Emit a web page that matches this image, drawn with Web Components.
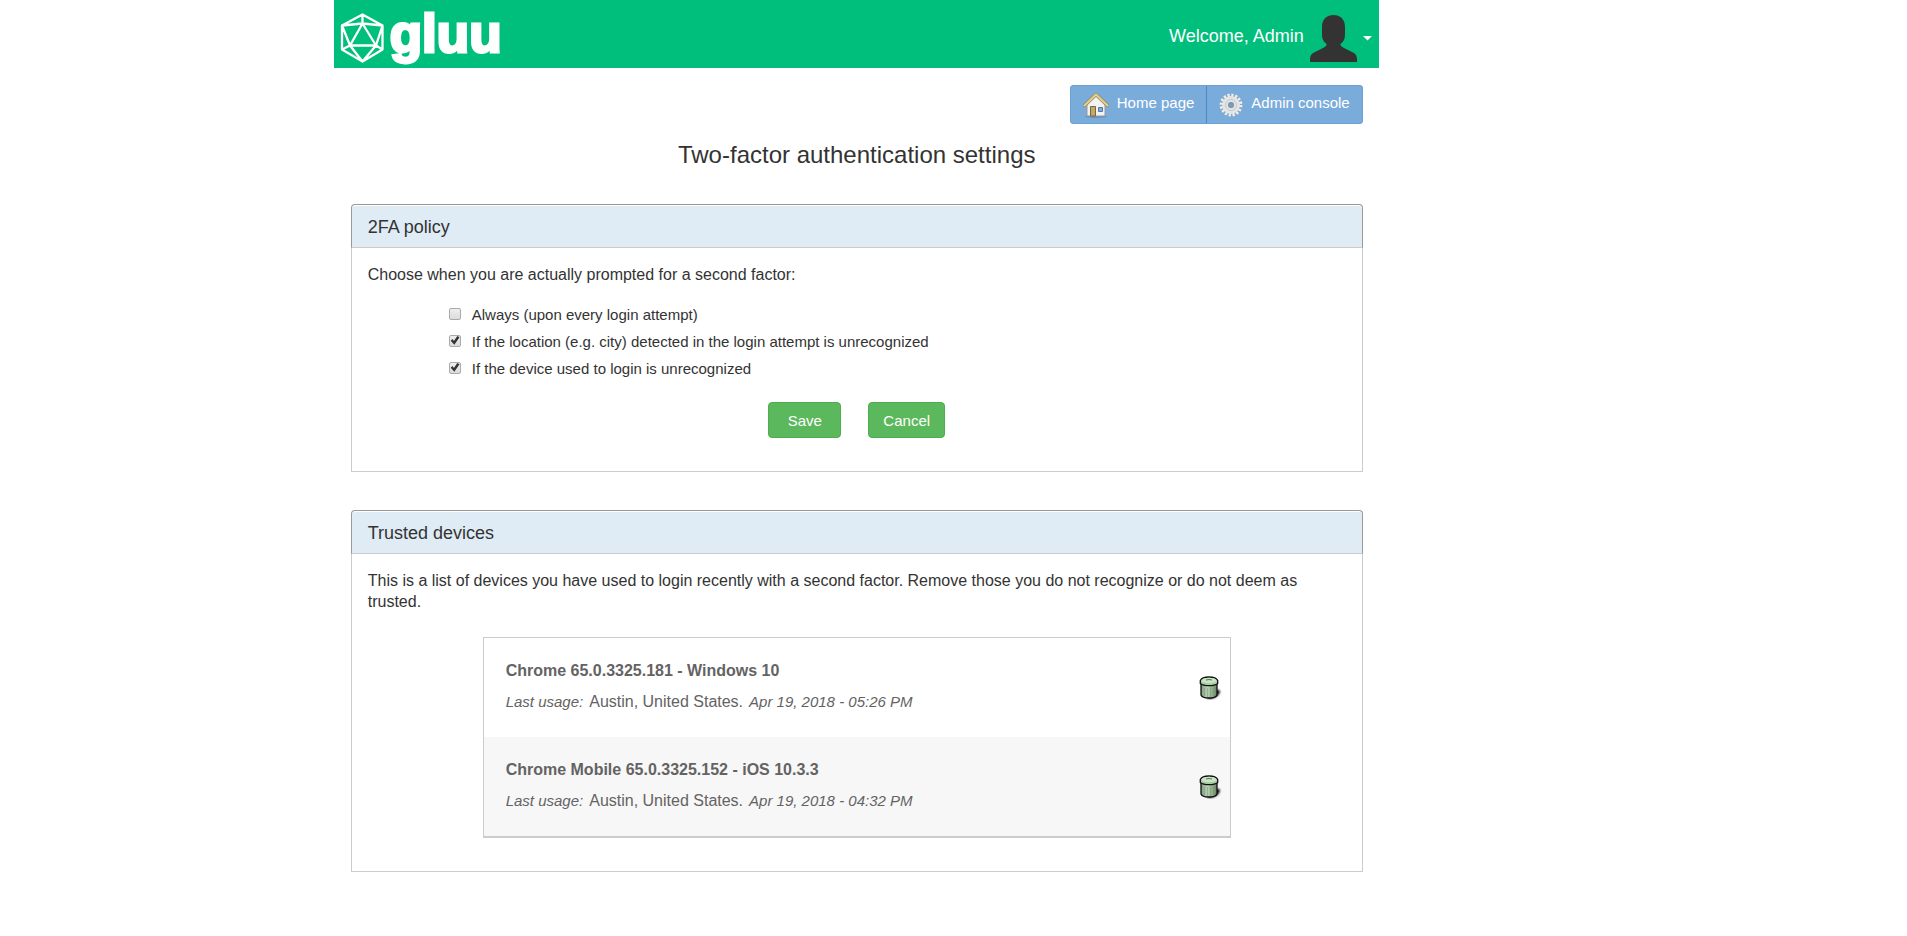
<!DOCTYPE html>
<html lang="en">
<head>
<meta charset="utf-8">
<meta name="viewport" content="width=device-width, initial-scale=1">
<title>Two-factor authentication settings</title>
<style>
  body { margin: 0; background: #fff; color: #333; font: 16px/21px "Liberation Sans", Arial, sans-serif; }
</style>
</head>
<body>
<gluu-page>
  <gluu-header slot="header">Welcome, Admin</gluu-header>
  <gluu-nav slot="nav"></gluu-nav>
  <span slot="title">Two-factor authentication settings</span>
  <gluu-panel>
    <span slot="heading">2FA policy</span>
    <gluu-policy>
      <span slot="intro">Choose when you are actually prompted for a second factor:</span>
      <gluu-option>Always (upon every login attempt)</gluu-option>
      <gluu-option checked>If the location (e.g. city) detected in the login attempt is unrecognized</gluu-option>
      <gluu-option checked>If the device used to login is unrecognized</gluu-option>
      <gluu-button slot="actions">Save</gluu-button>
      <gluu-button slot="actions">Cancel</gluu-button>
    </gluu-policy>
  </gluu-panel>
  <gluu-panel>
    <span slot="heading">Trusted devices</span>
    <gluu-devices>
      <span slot="intro">This is a list of devices you have used to login recently with a second factor. Remove those you do not recognize or do not deem as trusted.</span>
      <gluu-device>
        <span slot="name">Chrome 65.0.3325.181 - Windows 10</span>
        <span slot="place">Austin, United States.</span>
        <span slot="time">Apr 19, 2018 - 05:26 PM</span>
      </gluu-device>
      <gluu-device>
        <span slot="name">Chrome Mobile 65.0.3325.152 - iOS 10.3.3</span>
        <span slot="place">Austin, United States.</span>
        <span slot="time">Apr 19, 2018 - 04:32 PM</span>
      </gluu-device>
    </gluu-devices>
  </gluu-panel>
</gluu-page>

<script>
const define = (name, html) => {
  const template = document.createElement('template');
  template.innerHTML = html;
  customElements.define(name, class extends HTMLElement {
    constructor() {
      super();
      this.attachShadow({ mode: 'open' }).append(template.content.cloneNode(true));
    }
    connectedCallback() {
      const box = this.shadowRoot.querySelector('input');
      if (box) box.checked = this.hasAttribute('checked');
    }
  });
};

define('gluu-page', `
  <style>
    :host { display: block; max-width: 1045px; margin-left: 17.5%; }
    main { padding: 17px 16px 40px 17px; }
    .nav { display: flex; justify-content: flex-end; }
    h1 { margin: 16px 0 34px; font-size: 24px; line-height: 30px; font-weight: 400; text-align: center; }
    .panels { display: flex; flex-direction: column; gap: 38px; }
  </style>
  <slot name="header"></slot>
  <main>
    <div class="nav"><slot name="nav"></slot></div>
    <h1><slot name="title"></slot></h1>
    <div class="panels"><slot></slot></div>
  </main>`);

define('gluu-header', `
  <style>
    :host { display: block; }
    header { display: flex; justify-content: space-between; height: 68px; background: #00be7b; color: #fff; }
    .logo { display: flex; align-items: center; gap: 5px; padding-left: 6px; color: #fff; text-decoration: none; }
    .logo svg { margin-top: 8px; }
    .word { font-weight: 700; font-size: 53px; line-height: 66px; -webkit-text-stroke: 3px #fff; stroke-linejoin: round; }
    button { display: flex; align-items: center; gap: 6px; border: 0; padding: 8px 7px 0 0; background: none; color: inherit; font: inherit; font-size: 18px; cursor: pointer; }
    .label { padding-bottom: 4px; }
  </style>
  <header>
    <a class="logo" href="#" aria-label="gluu">
      <svg width="45" height="50" viewBox="0 0 45 50" fill="none" stroke="#fff" stroke-width="2.300" stroke-linejoin="round">
        <path d="M22.500 1.500 42.500 12.500V36.500L22.500 48.500 2 36.500V12.500ZM22.500 10.500 10 32.500H36ZM22.500 1.500V10.500L42.500 12.500 36 32.500 42.500 36.500M22.500 10.500 2 12.500 10 32.500 2 36.500M10 32.500 22.500 48.500 36 32.500"/>
      </svg>
      <span class="word">gluu</span>
    </a>
    <button type="button" aria-haspopup="menu">
      <span class="label"><slot></slot></span>
      <svg width="47" height="47" viewBox="0 0 47 47" fill="#333"><path d="M0 47V43Q0 40 3 38L13 33Q17 31 16.500 29Q12 26 12 20V12C12 4 17 0 23.500 0S35 4 35 12V20Q35 26 30.500 29Q30 31 34 33L44 38Q47 40 47 43V47Z"/></svg>
      <svg width="9" height="5" viewBox="0 0 9 5" fill="#fff"><path d="M0 0H9L4.500 4.500Z"/></svg>
    </button>
  </header>`);

define('gluu-nav', `
  <style>
    :host { display: block; }
    nav { display: flex; border: 1px solid #6ba1d3; border-radius: 3px; background: #7aacdb; }
    a { display: flex; align-items: center; gap: 8px; height: 37px; padding: 0 12px; color: #fff; font-size: 15px; text-decoration: none; }
    a + a { border-left: 1px solid #4a8ac6; }
    span { padding-bottom: 4px; }
  </style>
  <nav>
    <a href="#">
      <svg width="26" height="26" viewBox="0 0 26 26"><ellipse cx="13" cy="24.500" rx="11" ry="1.500" fill="#577fa5" opacity=".6"/><path d="M4 12 13 3l9 9v12H4Z" fill="#f2f2f2" stroke="#999" stroke-width="1"/><path d="M7.500 24v-9.500h5V24Z" fill="#c1a96b" stroke="#7a683d"/><path d="M15.500 15.500h4v4h-4Z" fill="#80add8" stroke="#5577a0"/><path d="M1.500 13.500 13 2.500l11.500 11" fill="none" stroke="#8f8355" stroke-width="3.500" stroke-linecap="round" stroke-linejoin="round"/><path d="M1.500 13.500 13 2.500l11.500 11" fill="none" stroke="#e0d08e" stroke-width="2.300" stroke-linecap="round" stroke-linejoin="round"/></svg>
      <span>Home page</span>
    </a>
    <a href="#">
      <svg width="24" height="24" viewBox="0 0 24 24"><circle cx="12" cy="12" r="10" fill="none" stroke="#7d8fa0" stroke-width="4" stroke-dasharray="2.500 1.427" opacity=".5"/><circle cx="12" cy="12" r="9.500" fill="none" stroke="#ededed" stroke-width="4" stroke-dasharray="2.200 1.531"/><circle cx="12" cy="12" r="6" fill="none" stroke="#e5e5e5" stroke-width="6"/><circle cx="12" cy="12" r="5.500" fill="none" stroke="#c5c8ca"/><circle cx="12" cy="12" r="2.500" fill="#6e9fcd" stroke="#8c9299"/></svg>
      <span>Admin console</span>
    </a>
  </nav>`);

define('gluu-panel', `
  <style>
    :host { display: block; }
    h2 { margin: 0; padding: 12px 16px 9px; border: 1px solid #999; border-bottom-color: #ccc; border-radius: 4px 4px 0 0; background: #dfecf5; box-shadow: inset 0 1px #fff; font-size: 18px; line-height: 21px; font-weight: 400; }
    .body { padding: 16px 16px 33px; border: 1px solid #ccc; border-top: 0; }
  </style>
  <section>
    <h2><slot name="heading"></slot></h2>
    <div class="body"><slot></slot></div>
  </section>`);

define('gluu-policy', `
  <style>
    :host { display: block; }
    p { margin: 0 0 16px; }
    .options { display: flex; flex-direction: column; padding-left: 81px; }
    .actions { display: flex; justify-content: center; gap: 27px; margin-top: 20px; }
  </style>
  <form>
    <p><slot name="intro"></slot></p>
    <div class="options"><slot></slot></div>
    <div class="actions"><slot name="actions"></slot></div>
  </form>`);

define('gluu-option', `
  <style>
    :host { display: block; }
    label { display: flex; align-items: center; gap: 11px; line-height: 27px; font-size: 15px; }
    input { appearance: none; flex: none; box-sizing: border-box; width: 12px; height: 12px; margin: 0 0 2px; border: 1px solid #aaa; border-radius: 2px; background: linear-gradient(#eee, #dcdcdc); }
    input:checked::before { content: ""; display: block; width: 10px; height: 10px; background: #333; clip-path: polygon(10% 52%, 28% 36%, 42% 55%, 76% 4%, 98% 18%, 46% 92%); }
  </style>
  <label><input type="checkbox"><span><slot></slot></span></label>`);

define('gluu-button', `
  <style>
    :host { display: block; }
    button { display: block; height: 36px; min-width: 73px; padding: 0 14px; border: 1px solid #4cae4c; border-radius: 4px; background: #5cb85c; color: #fff; font: inherit; font-size: 15px; cursor: pointer; }
  </style>
  <button type="button"><slot></slot></button>`);

define('gluu-devices', `
  <style>
    :host { display: block; }
    p { margin: 0 0 25px; }
    .list { width: 76.500%; box-sizing: border-box; margin: 0 auto; border: 1px solid #ccc; border-bottom-width: 2px; }
    ::slotted(gluu-device:nth-of-type(even)) { background: #f7f7f7; }
  </style>
  <p><slot name="intro"></slot></p>
  <div class="list"><slot></slot></div>`);

define('gluu-device', `
  <style>
    :host { display: block; color: #636363; }
    article { display: flex; align-items: center; justify-content: space-between; height: 99px; padding: 0 8px 0 22px; }
    h3 { margin: 0 0 10px; font-size: 16px; line-height: 21px; }
    p { display: flex; align-items: baseline; gap: 6px; margin: 0 0 4px; }
    em { font-size: 15px; }
    button { display: block; border: 0; padding: 0; background: none; cursor: pointer; }
    svg { display: block; }
  </style>
  <article>
    <div>
      <h3><slot name="name"></slot></h3>
      <p><em>Last usage:</em> <slot name="place"></slot> <em><slot name="time"></slot></em></p>
    </div>
    <button type="button" aria-label="Remove device">
      <svg width="23" height="24" viewBox="0 0 23 24">
        <defs>
          <linearGradient id="can"><stop stop-color="#7d9c7b"/><stop offset=".4" stop-color="#b9d3b5"/><stop offset="1" stop-color="#67855f"/></linearGradient>
          <filter id="soft"><feGaussianBlur stdDeviation="1"/></filter>
        </defs>
        <path d="M7 21 17 14Q21 13 21 16Q19 22 10 23Z" fill="#000" filter="url(#soft)"/>
        <path d="M2 7V19Q3 22 10 22T18 19V7Z" fill="url(#can)" stroke="#111" stroke-width="1.300"/>
        <path d="M5.500 12V20M8.500 12V21M11.500 12V21M14.500 12V20" stroke="#7d997a" stroke-width=".6"/>
        <path d="M1.300 4.500Q3 1 10 1T18.700 4.500V7.500Q16 9.700 10 9.700T1.300 7.500Z" fill="#a9caa5" stroke="#111" stroke-width="1.300"/>
        <ellipse cx="10" cy="4.500" rx="7.500" ry="2.800" fill="#c9e3c5"/>
        <path d="M7 4Q10 3 13 4" fill="none" stroke="#5c765a"/>
      </svg>
    </button>
  </article>`);
</script>
</body>
</html>
